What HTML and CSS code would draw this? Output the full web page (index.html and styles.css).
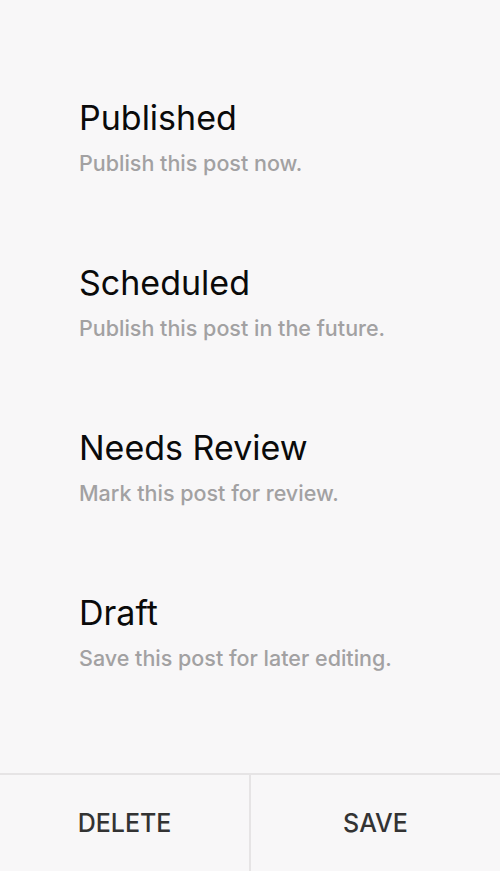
FILE: index.html
```html
<!DOCTYPE html>
<html lang="en">
<head>
<meta charset="UTF-8" />
<meta name="viewport" content="width=device-width, initial-scale=1" />
<title>Post Status</title>
<link rel="stylesheet" href="styles.css">
</head>
<body>
<div class="sheet">
  <ul class="options">
    <li class="option">
      <div class="option-title">Published</div>
      <div class="option-desc">Publish this post now.</div>
    </li>
    <li class="option">
      <div class="option-title">Scheduled</div>
      <div class="option-desc">Publish this post in the future.</div>
    </li>
    <li class="option">
      <div class="option-title">Needs Review</div>
      <div class="option-desc">Mark this post for review.</div>
    </li>
    <li class="option">
      <div class="option-title">Draft</div>
      <div class="option-desc">Save this post for later editing.</div>
    </li>
  </ul>

  <div class="actions">
    <button class="action">DELETE</button>
    <button class="action">SAVE</button>
  </div>
</div>
</body>
</html>
```
FILE: styles.css
```css
body {
  margin: 0; padding: 0;
  font-family: Inter, "Noto Sans", sans-serif;
  background: #f8f7f8;
  color: #0a0a0a;
}
.sheet {
  height: 871px;
  display: flex;
  flex-direction: column;
}
.options {
  list-style: none;
  margin: 0;
  padding: 98px 0 0 79px;
  flex: 1;
}
.option {
  height: 165px;
}
.option-title {
  font-size: 34px;
  line-height: 40px;
  font-weight: 400;
  color: #0a0a0a;
}
.option-desc {
  margin-top: 12px;
  font-size: 21.5px;
  line-height: 26px;
  font-weight: 500;
  color: #a2a1a2;
}
.actions {
  display: flex;
  height: 96px;
  border-top: 2px solid #e6e4e5;
}
.action {
  flex: 1;
  border: none;
  background: none;
  font-family: inherit;
  font-size: 25px;
  font-weight: 500;
  color: #333;
  cursor: pointer;
}
.action + .action {
  border-left: 2px solid #e6e4e5;
}
```
